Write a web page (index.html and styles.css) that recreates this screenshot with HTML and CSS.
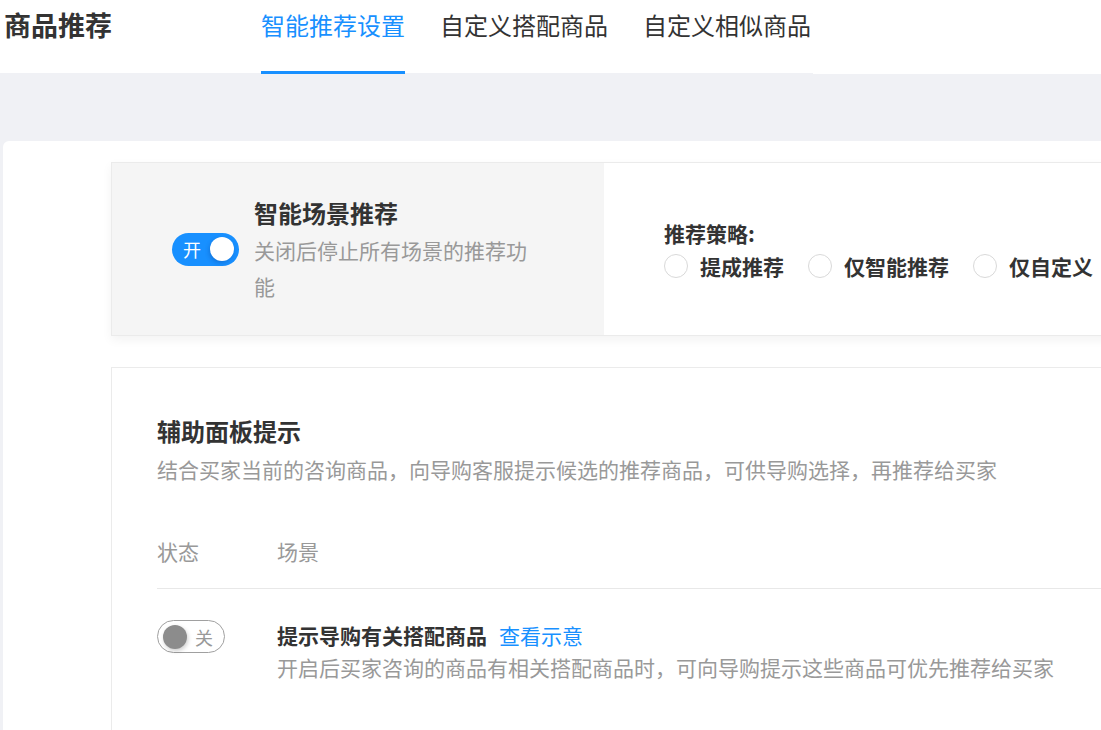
FILE: index.html
```html
<!DOCTYPE html>
<html lang="zh-CN">
<head>
<meta charset="utf-8">
<title>商品推荐</title>
<link rel="stylesheet" href="styles.css">
</head>
<body>
<header class="header">
  <div class="nav">
    <div class="page-title">商品推荐</div>
    <div class="tabs">
      <div class="tab active">智能推荐设置</div>
      <div class="tab">自定义搭配商品</div>
      <div class="tab">自定义相似商品</div>
    </div>
  </div>
</header>
<main class="main">
  <div class="card">
    <section class="scene-box">
      <div class="scene-left">
        <span class="switch on"><span class="switch-text">开</span><span class="knob"></span></span>
        <div class="scene-info">
          <div class="scene-title">智能场景推荐</div>
          <div class="scene-desc">关闭后停止所有场景的推荐功能</div>
        </div>
      </div>
      <div class="scene-right">
        <div class="strategy-label">推荐策略:</div>
        <div class="radios">
          <label class="radio"><span class="radio-dot"></span><span class="radio-label">提成推荐</span></label>
          <label class="radio"><span class="radio-dot"></span><span class="radio-label">仅智能推荐</span></label>
          <label class="radio"><span class="radio-dot"></span><span class="radio-label">仅自定义</span></label>
        </div>
      </div>
    </section>
    <section class="panel-box">
      <div class="panel-title">辅助面板提示</div>
      <div class="panel-desc">结合买家当前的咨询商品，向导购客服提示候选的推荐商品，可供导购选择，再推荐给买家</div>
      <div class="table">
        <div class="table-head">
          <div class="col-status">状态</div>
          <div class="col-scene">场景</div>
        </div>
        <div class="table-row">
          <div class="col-status">
            <span class="switch off"><span class="knob"></span><span class="switch-text">关</span></span>
          </div>
          <div class="col-scene">
            <div class="row-title"><span class="row-name">提示导购有关搭配商品</span><a class="row-link">查看示意</a></div>
            <div class="row-desc">开启后买家咨询的商品有相关搭配商品时，可向导购提示这些商品可优先推荐给买家</div>
          </div>
        </div>
      </div>
    </section>
  </div>
</main>
</body>
</html>
```

FILE: styles.css
```css
* { box-sizing: border-box; }
html, body {
  margin: 0;
  padding: 0;
}
body {
  background: #f0f1f5;
  font-family: "Noto Sans CJK SC", "Noto Sans", sans-serif;
  color: #333;
  overflow: hidden;
  width: 1101px;
  height: 730px;
}
.header {
  background: #fff;
  height: 74px;
}
.nav {
  width: 813px;
  height: 74px;
  display: flex;
  border-bottom: 1px solid #f0f1f5;
}
.page-title {
  flex: 0 0 261px;
  padding-left: 4px;
  font-size: 27px;
  font-weight: 700;
  line-height: 50px;
  color: #333;
}
.tabs {
  display: flex;
  flex-shrink: 0;
  gap: 35px;
}
.tab {
  font-size: 24px;
  line-height: 50px;
  height: 74px;
  margin-bottom: -1px;
  color: #333;
  white-space: nowrap;
  border-bottom: 3px solid transparent;
}
.tab.active {
  color: #1890ff;
  border-bottom-color: #1890ff;
}
.main {
  padding-top: 67px;
  padding-left: 3px;
}
.card {
  background: #fff;
  border-top-left-radius: 6px;
  width: 1098px;
  height: 589px;
  overflow: hidden;
  padding: 21px 0 0 108px;
}
.scene-box {
  display: flex;
  height: 174px;
  margin-right: -20px;
  border: 1px solid #ebebeb;
  box-shadow: 0 4px 10px rgba(0, 0, 0, 0.05);
}
.scene-left {
  width: 492px;
  background: #f5f5f5;
  display: flex;
  align-items: center;
  padding-left: 60px;
}
.scene-info {
  margin-left: 15px;
  width: 282px;
}
.scene-title {
  font-size: 24px;
  font-weight: 700;
  line-height: 36px;
  color: #333;
}
.scene-desc {
  margin-top: 1px;
  font-size: 21px;
  line-height: 36px;
  color: #999;
}
.scene-right {
  flex: 1;
  background: #fff;
  display: flex;
  flex-direction: column;
  justify-content: center;
  padding-left: 60px;
}
.strategy-label {
  font-size: 21px;
  font-weight: 700;
  line-height: 34px;
  color: #333;
}
.radios {
  display: flex;
  align-items: center;
  height: 32px;
}
.radio {
  display: flex;
  align-items: center;
  margin-right: 24px;
}
.radio-dot {
  width: 24px;
  height: 24px;
  border-radius: 50%;
  border: 1px solid #d9d9d9;
  background: #fff;
  margin-right: 12px;
}
.radio-label {
  font-size: 21px;
  font-weight: 700;
  line-height: 32px;
  color: #333;
  white-space: nowrap;
}
.switch {
  display: inline-flex;
  align-items: center;
  width: 68px;
  height: 33px;
  border-radius: 17px;
  flex-shrink: 0;
}
.switch.on {
  width: 67px;
  background: #1890ff;
  padding: 0 5px 0 11px;
  justify-content: space-between;
}
.switch.off {
  background: #fff;
  border: 1px solid #a0a0a0;
  padding: 0 11px 0 5px;
  justify-content: space-between;
}
.switch-text {
  font-size: 18px;
  line-height: 20px;
}
.switch.on .switch-text { color: #fff; }
.switch.off .switch-text { color: #999; }
.knob {
  width: 24px;
  height: 24px;
  border-radius: 50%;
}
.switch.on .knob {
  background: #fff;
  box-shadow: -1px 2px 4px rgba(0, 40, 120, 0.25);
}
.switch.off .knob {
  background: #8c8c8c;
  box-shadow: 1px 2px 4px rgba(0, 0, 0, 0.2);
}
.panel-box {
  margin-top: 31px;
  margin-right: -20px;
  border: 1px solid #ebebeb;
  height: 400px;
  padding: 45px 0 0 45px;
}
.panel-title {
  font-size: 24px;
  font-weight: 700;
  line-height: 36px;
  color: #333;
}
.panel-desc {
  margin-top: 2px;
  font-size: 21px;
  line-height: 36px;
  color: #999;
}
.table {
  margin-top: 46px;
}
.table-head {
  display: flex;
  font-size: 21px;
  line-height: 36px;
  color: #999;
  padding-bottom: 19px;
  border-bottom: 1px solid #e8e8e8;
}
.col-status {
  width: 120px;
  flex-shrink: 0;
}
.col-scene {
  flex: 1;
}
.table-row {
  display: flex;
  padding-top: 31px;
}
.row-title {
  display: flex;
  align-items: center;
  line-height: 30px;
}
.row-name {
  font-size: 21px;
  font-weight: 700;
  color: #333;
}
.row-link {
  margin-left: 12px;
  font-size: 21px;
  color: #1890ff;
  cursor: pointer;
}
.row-desc {
  margin-top: 2px;
  font-size: 21px;
  line-height: 30px;
  color: #999;
}
```
